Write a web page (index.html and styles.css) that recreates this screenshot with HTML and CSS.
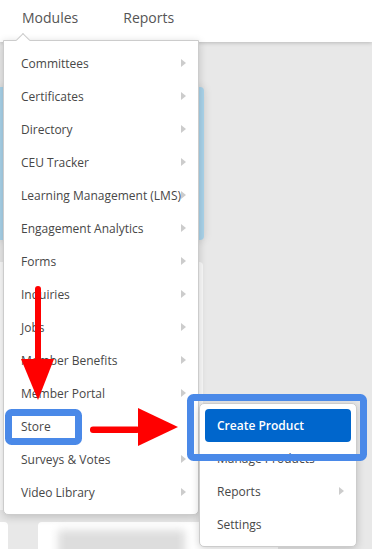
FILE: index.html
```html
<!DOCTYPE html>
<html lang="en">
<head>
    <meta charset="UTF-8">
    <meta name="viewport" content="width=device-width, initial-scale=1.0">
    <title>Modules - Store</title>
    <link rel="stylesheet" href="styles.css">
</head>
<body>
    <header class="topbar">
        <nav class="nav">
            <a class="nav-link">Modules</a>
            <a class="nav-link">Reports</a>
        </nav>
    </header>

    <main class="content">
        <div class="banner"></div>
        <div class="panel"></div>
        <div class="tiles">
            <div class="tile tile-edge"></div>
            <div class="tile"><div class="tile-blur"></div></div>
        </div>
    </main>

    <!-- Modules dropdown -->
    <ul class="menu">
        <li class="menu-item has-sub">Committees</li>
        <li class="menu-item has-sub">Certificates</li>
        <li class="menu-item has-sub">Directory</li>
        <li class="menu-item has-sub">CEU Tracker</li>
        <li class="menu-item has-sub">Learning Management (LMS)</li>
        <li class="menu-item has-sub">Engagement Analytics</li>
        <li class="menu-item has-sub">Forms</li>
        <li class="menu-item has-sub">Inquiries</li>
        <li class="menu-item has-sub">Jobs</li>
        <li class="menu-item has-sub">Member Benefits</li>
        <li class="menu-item has-sub">Member Portal</li>
        <li class="menu-item">Store</li>
        <li class="menu-item has-sub">Surveys &amp; Votes</li>
        <li class="menu-item has-sub">Video Library</li>
    </ul>

    <!-- Store submenu -->
    <ul class="submenu">
        <li class="menu-item active">Create Product</li>
        <li class="menu-item">Manage Products</li>
        <li class="menu-item has-sub">Reports</li>
        <li class="menu-item">Settings</li>
    </ul>

    <!-- tutorial annotations -->
    <svg class="annotations" width="372" height="549" viewBox="0 0 372 549">
        <rect x="8.5" y="412.5" width="70" height="29" rx="3" fill="none" stroke="#4a89e8" stroke-width="7"/>
        <rect x="190.5" y="397.5" width="173" height="60" rx="3" fill="none" stroke="#4a89e8" stroke-width="7"/>
        <rect x="35" y="286" width="6" height="76" rx="3" fill="#f00"/>
        <polygon points="21,359 54,359 38,400" fill="#f00"/>
        <rect x="90" y="426.5" width="50" height="6.5" rx="3" fill="#f00"/>
        <polygon points="138,408 138,446 178,427" fill="#f00"/>
    </svg>
</body>
</html>
```

FILE: styles.css
```css
body {
    margin: 0;
    background: #e8e8e8;
    font-family: "Open Sans", "Liberation Sans", sans-serif;
    color: #474747;
    overflow: hidden;
    height: 549px;
}
.topbar {
    height: 42px;
    background: #fff;
    box-shadow: 0 1px 4px rgba(0,0,0,0.2);
    position: relative;
    z-index: 1;
}
.nav {
    display: flex;
    gap: 45px;
    padding-left: 22px;
}
.nav-link {
    font-size: 14px;
    line-height: 36px;
    color: #555;
}
.content {
    padding-top: 45px;
}
.banner {
    width: 204px;
    height: 153px;
    background: #a9d3ea;
    border-radius: 0 4px 4px 0;
    box-shadow: 0 0 10px rgba(0,0,0,0.12);
}
.panel {
    width: 203px;
    height: 248px;
    margin-top: 22px;
    background: #fafafa;
    border-radius: 0 4px 0 0;
}
.tiles {
    display: flex;
    gap: 30px;
    margin-top: 12px;
}
.tile {
    width: 240px;
    height: 40px;
    background: #fff;
    border-radius: 4px;
    padding: 8px 20px;
    box-sizing: border-box;
}
.tile-edge {
    width: 8px;
    padding: 0;
    border-radius: 0 4px 0 0;
}
.tile-blur {
    width: 127px;
    height: 30px;
    background: #ddd;
    filter: blur(4px);
}
.menu, .submenu {
    list-style: none;
    margin: 0;
    position: absolute;
    background: #fff;
    border: 1px solid #ccc;
    border-radius: 0 0 5px 5px;
    box-shadow: 0 2px 8px rgba(0,0,0,0.18);
    z-index: 2;
}
.menu {
    top: 40px;
    left: 3px;
    width: 194px;
    padding: 6px 0 5px;
}
.menu::before {
    content: "";
    position: absolute;
    top: -6px;
    left: 14px;
    width: 9px;
    height: 9px;
    background: #fff;
    border-top: 1px solid #ccc;
    border-left: 1px solid #ccc;
    transform: rotate(45deg);
}
.menu-item {
    height: 33px;
    line-height: 33px;
    font-size: 12px;
    padding-left: 17px;
    position: relative;
    white-space: nowrap;
}
.has-sub::after {
    content: "";
    position: absolute;
    right: 12px;
    top: 12px;
    border-left: 5px solid #ccc;
    border-top: 4.5px solid transparent;
    border-bottom: 4.5px solid transparent;
}
.submenu {
    top: 403px;
    left: 199px;
    width: 146px;
    padding: 5px;
    border-radius: 5px;
}
.submenu .menu-item {
    padding-left: 12px;
}
.submenu .has-sub::after {
    right: 7px;
}
.menu-item.active {
    background: #0066cc;
    color: #fff;
    font-weight: 600;
    border-radius: 4px;
}
.annotations {
    position: absolute;
    top: 0;
    left: 0;
    z-index: 3;
    pointer-events: none;
}
```
